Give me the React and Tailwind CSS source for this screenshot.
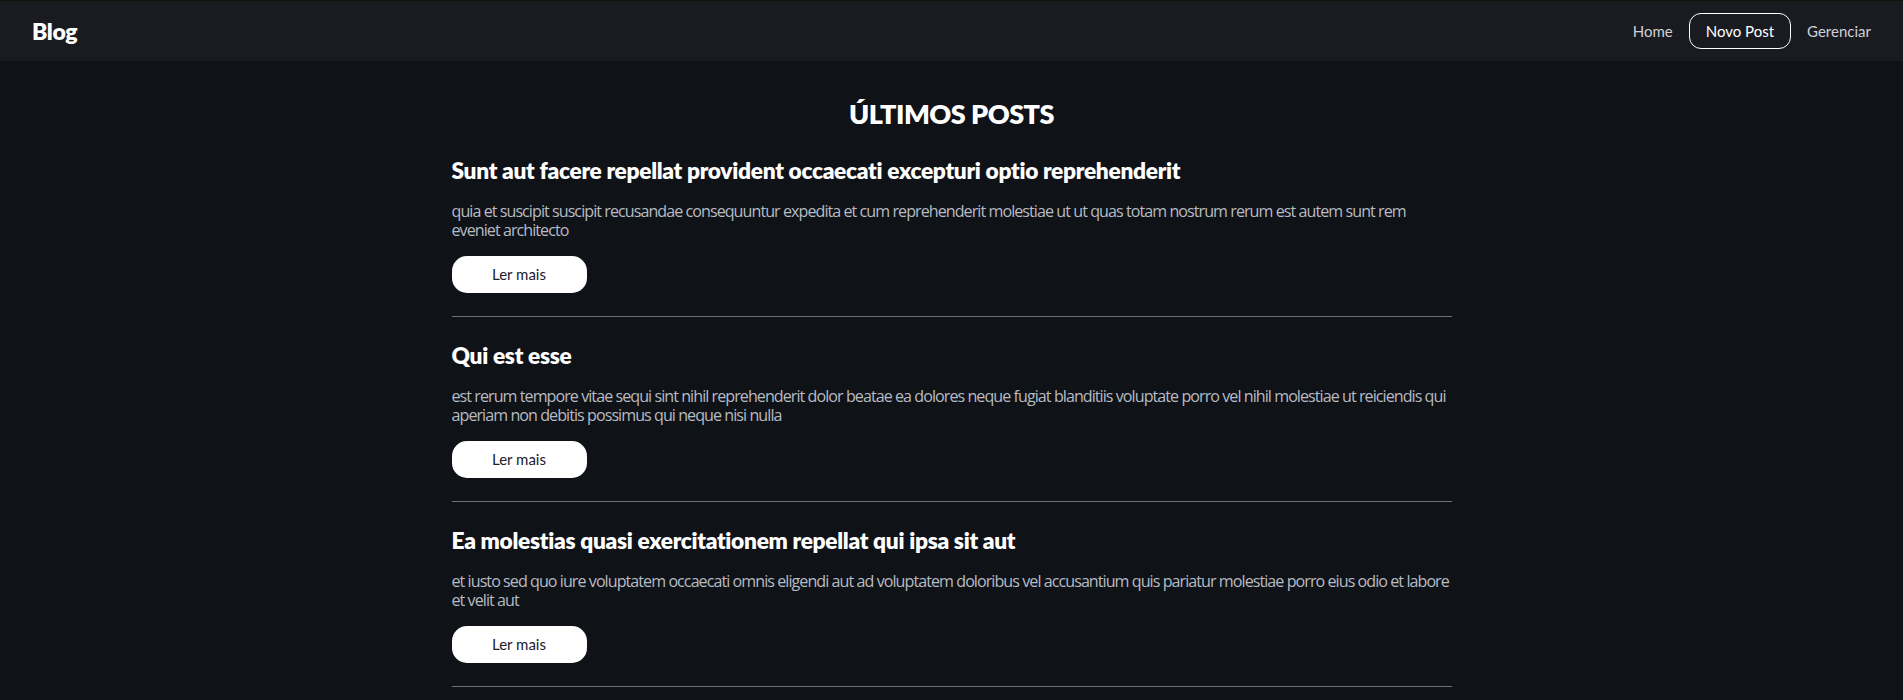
import React from "react";

const posts = [
  {
    title: "Sunt aut facere repellat provident occaecati excepturi optio reprehenderit",
    body: "quia et suscipit suscipit recusandae consequuntur expedita et cum reprehenderit molestiae ut ut quas totam nostrum rerum est autem sunt rem eveniet architecto",
  },
  {
    title: "Qui est esse",
    body: "est rerum tempore vitae sequi sint nihil reprehenderit dolor beatae ea dolores neque fugiat blanditiis voluptate porro vel nihil molestiae ut reiciendis qui aperiam non debitis possimus qui neque nisi nulla",
  },
  {
    title: "Ea molestias quasi exercitationem repellat qui ipsa sit aut",
    body: "et iusto sed quo iure voluptatem occaecati omnis eligendi aut ad voluptatem doloribus vel accusantium quis pariatur molestiae porro eius odio et labore et velit aut",
  },
  {
    title: "Eum et est occaecati",
    body: "ullam et saepe reiciendis voluptatem adipisci sit amet autem assumenda provident rerum culpa quis hic commodi nesciunt rem tenetur doloremque ipsam iure quis sunt voluptatem rerum illo velit",
  },
];

export default function App() {
  return (
    <div
      className="min-h-screen bg-[#0f1217] text-white"
      style={{ fontFamily: "Lato, 'Noto Sans', sans-serif" }}
    >
      <header className="flex h-[61px] items-center justify-between border-t border-[#0b150d] bg-[#1a1b20] pl-8 pr-4">
        <span className="text-[23px] font-extrabold tracking-[-0.4px]">Blog</span>
        <nav className="flex items-center text-[15px]">
          <a className="px-4 text-[#cfd1d6]">Home</a>
          <a className="flex h-[36px] items-center rounded-[12px] border border-white px-4 text-white">
            Novo Post
          </a>
          <a className="px-4 text-[#cfd1d6]">Gerenciar</a>
        </nav>
      </header>
      <main className="mx-auto w-[1000px] pt-[35px]">
        <h1 className="text-center text-[27px] font-extrabold leading-[36px] tracking-[-0.5px]">
          ÚLTIMOS POSTS
        </h1>
        {posts.map((p, i) => (
          <article key={i} className="border-b border-[#6f7074] pb-[23px] pt-[25px]">
            <h2 className="text-[22.7px] font-extrabold leading-[28px] tracking-[-0.3px]">{p.title}</h2>
            <p
              className="mt-[17px] text-[16.1px] leading-[18.5px] tracking-[-0.95px] text-[#b7bbc3]"
              style={{ fontFamily: "'Open Sans', sans-serif" }}
            >
              {p.body}
            </p>
            <button className="mt-[17px] h-[37px] w-[135px] rounded-[15px] bg-white text-[15px] text-[#1b2030]">
              Ler mais
            </button>
          </article>
        ))}
      </main>
    </div>
  );
}
